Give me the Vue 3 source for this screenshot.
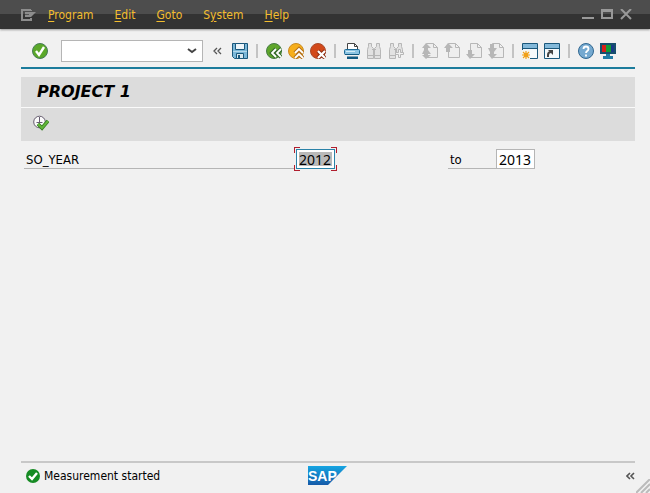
<script setup>
import { ref } from "vue";

const menus = ["Program", "Edit", "Goto", "System", "Help"];
const command = ref("");
const yearFrom = ref("2012");
const yearTo = ref("2013");
const status = ref("Measurement started");
</script>

<template>
  <div class="window">
    <header class="titlebar">
      <button class="plain menu-icon" aria-label="Window menu">
        <svg width="16" height="12" viewBox="0 0 16 12">
          <path d="M10 1H1v10h9V9M10 1v1" fill="none" stroke="#8d8d8d" stroke-width="2" />
          <path d="M4 3h11l-5 5H4z" fill="#8d8d8d" />
          <path d="M4 5h4v1H4z" fill="#555" />
        </svg>
      </button>
      <nav class="menus">
        <button v-for="menu in menus" :key="menu" class="plain menu">
          <u v-if="menu !== 'System'">{{ menu[0] }}</u
          ><template v-if="menu !== 'System'">{{ menu.slice(1) }}</template
          ><template v-else>S<u>y</u>stem</template>
        </button>
      </nav>
      <div class="controls">
        <button class="plain" aria-label="Minimize">
          <svg width="12" height="12"><path d="M0 8h12v2H0z" fill="#999" /></svg>
        </button>
        <button class="plain" aria-label="Maximize">
          <svg width="12" height="12">
            <path d="M0 0h12v10H0zM2 3v5h8V3z" fill="#999" fill-rule="evenodd" />
          </svg>
        </button>
        <button class="plain" aria-label="Close">
          <svg width="12" height="12">
            <path d="M1 0l10 10M11 0L1 10" stroke="#999" stroke-width="2" />
          </svg>
        </button>
      </div>
    </header>

    <main class="content">
      <div class="toolbar">
        <button class="plain enter" aria-label="Enter">
          <svg width="16" height="16">
            <circle cx="8" cy="8" r="7.5" fill="#5ba829" stroke="#477c57" />
            <path d="M4 8l3 4 5-8" fill="none" stroke="#fff" stroke-width="2.4" />
          </svg>
        </button>
        <div class="combo">
          <select v-model="command" aria-label="Command">
            <option value=""></option>
          </select>
          <svg class="arrow" width="10" height="6">
            <path d="M1 1l4 3 4-3" fill="none" stroke="#444" stroke-width="2" />
          </svg>
        </div>
        <button class="plain collapse" aria-label="Hide command field">
          <svg width="9" height="8">
            <path d="M4 1L1 4l3 3M8 1L5 4l3 3" fill="none" stroke="#555" stroke-width="1.3" />
          </svg>
        </button>
        <button class="plain" aria-label="Save">
          <svg width="16" height="16">
            <path d="M.5 .5h15v15h-13l-2-2z" fill="#7bb7d8" stroke="#1b587c" />
            <path d="M3.5 .5h9v6h-9z" fill="#eef6fa" stroke="#1b587c" />
            <path d="M1 8.5h14" stroke="#b5d8ea" />
            <path d="M4.5 10.5h7v5h-7z" fill="#d8e8ef" stroke="#1b587c" />
            <path d="M6 12h2v3H6z" fill="#1b587c" />
          </svg>
        </button>
        <span class="separator"></span>
        <button class="plain" aria-label="Back">
          <svg width="16" height="16">
            <circle cx="8" cy="8" r="7.5" fill="#5fa62b" stroke="#477c45" />
            <path d="M10 6l-4 4 4 4M15 6l-4 4 4 4" fill="none" stroke="#356b2b" stroke-width="4" />
            <path d="M10 6l-4 4 4 4M15 6l-4 4 4 4" fill="none" stroke="#fff" stroke-width="1.8" />
          </svg>
        </button>
        <button class="plain" aria-label="Exit">
          <svg width="16" height="16">
            <circle cx="8" cy="8" r="7.5" fill="#f6ae1b" stroke="#c98a22" />
            <path d="M7 10l4-4 4 4M7 15l4-4 4 4" fill="none" stroke="#b5711b" stroke-width="4" />
            <path d="M7 10l4-4 4 4M7 15l4-4 4 4" fill="none" stroke="#fff" stroke-width="1.8" />
          </svg>
        </button>
        <button class="plain" aria-label="Cancel">
          <svg width="16" height="16">
            <circle cx="8" cy="8" r="7.5" fill="#d2491a" stroke="#a84a2c" />
            <path d="M8 8l7 7M15 8l-7 7" stroke="#8b2d13" stroke-width="4" />
            <path d="M8 8l7 7M15 8l-7 7" stroke="#fff" stroke-width="2.2" />
          </svg>
        </button>
        <span class="separator"></span>
        <button class="plain" aria-label="Print">
          <svg width="16" height="16">
            <path d="M3.5 7V.5h7l3 3V7" fill="#fff" stroke="#444" />
            <path d="M10.5 .5v3h3" fill="none" stroke="#444" />
            <rect x=".5" y="6.5" width="15" height="5" rx="1" fill="#8ac3e2" stroke="#1e6a96" />
            <path d="M2 8.5h9" stroke="#d4ecf7" />
            <path d="M1 11h14v1H1zM3 13.500h11V16H3z" fill="#125a82" />
          </svg>
        </button>
        <button class="plain" aria-label="Find" disabled>
          <svg width="16" height="16" fill="#e2e2e2" stroke="#b7b7b7">
            <path d="M2.500 .5h3v3l2 2v10h-6v-9l1-3zM10.500 .5h3v3l1 3v9h-6v-10l2-2z" />
            <path d="M6 6.500h4M1.500 12.500h6M8.500 12.500h6" />
          </svg>
        </button>
        <button class="plain" aria-label="Find next" disabled>
          <svg width="16" height="16" fill="#e2e2e2" stroke="#b7b7b7">
            <path d="M2.500 .5h3v3l2 2v10h-6v-9l1-3zM10.500 .5h3v3l1 3v4h-6v-5l2-2z" />
            <path d="M6 6.500h2M1.500 12.500h6" />
            <path d="M10.500 6.500h2v3h3v2h-3v3h-2v-3h-3v-2h3z" fill="#f1f1f1" />
          </svg>
        </button>
        <span class="separator"></span>
        <button class="plain" aria-label="First page" disabled>
          <svg width="16" height="16">
            <path d="M4.500 .5h7l4 4v10h-11zM11.500 .5v4h4" fill="#eee" stroke="#b7b7b7" />
            <path d="M4 0l5 5H6v2l3 4H6v1h3l-5 4-4-4h2v-1H0l2-4V5H0z" fill="#b7b7b7" />
          </svg>
        </button>
        <button class="plain" aria-label="Previous page" disabled>
          <svg width="16" height="16">
            <path d="M4.500 .5h7l4 4v10h-11zM11.500 .5v4h4" fill="#eee" stroke="#b7b7b7" />
            <path d="M4 0l5 5H6v4H2V5H0z" fill="#b7b7b7" />
          </svg>
        </button>
        <button class="plain" aria-label="Next page" disabled>
          <svg width="16" height="16">
            <path d="M4.500 .5h7l4 4v10h-11zM11.500 .5v4h4" fill="#eee" stroke="#b7b7b7" />
            <path d="M2 7h4v4h3l-5 5-4-5h2z" fill="#b7b7b7" />
          </svg>
        </button>
        <button class="plain" aria-label="Last page" disabled>
          <svg width="16" height="16">
            <path d="M4.500 .5h7l4 4v10h-11zM11.500 .5v4h4" fill="#eee" stroke="#b7b7b7" />
            <path d="M2 1h4v4h3l-3 4v2h3l-5 5-4-5h2V9L0 5h2z" fill="#b7b7b7" />
          </svg>
        </button>
        <span class="separator"></span>
        <button class="plain" aria-label="New session">
          <svg width="16" height="16">
            <path d="M.5 .5h15v15H.5z" fill="#f5f9fb" stroke="#1b587c" />
            <path d="M1 1h14v4H1z" fill="#83b9da" />
            <path d="M1 5.5h14" stroke="#1b587c" />
            <path d="M0 7h8v9H0z" fill="#f5f5f5" />
            <path d="M4 8v8M0 12h8M1 9l6 6M7 9l-6 6" stroke="#f0a01b" stroke-width="1.200" />
            <circle cx="4" cy="12" r="2.300" fill="#f0a01b" />
          </svg>
        </button>
        <button class="plain" aria-label="Create shortcut">
          <svg width="16" height="16">
            <path d="M.5 .5h15v15H.5z" fill="#f5f9fb" stroke="#1b587c" />
            <path d="M1 1h14v4H1z" fill="#83b9da" />
            <path d="M1 5.5h14" stroke="#1b587c" />
            <path d="M4 14v-2q0-3 3-3" fill="none" stroke="#444" stroke-width="2" />
            <path d="M4 7h5v5z" fill="#444" />
          </svg>
        </button>
        <span class="separator"></span>
        <button class="plain" aria-label="Help">
          <svg width="16" height="16">
            <circle cx="8" cy="8" r="7.5" fill="#75a9d0" stroke="#316891" />
            <path d="M5.500 6q0-2.500 2.500-2.500T10.500 6q0 1-1.300 2T8 10M8 11.500v2" fill="none" stroke="#fff" stroke-width="1.800" />
          </svg>
        </button>
        <button class="plain" aria-label="Customize layout">
          <svg width="16" height="16">
            <path d="M0 0h16v11H0z" fill="#164f6d" />
            <path d="M2 2h4v7H2z" fill="#d71e18" />
            <path d="M6 2h5v7H6z" fill="#149c35" />
            <path d="M11 2h3v7h-3z" fill="#183a86" />
            <path d="M6 11h4v2H6zM3 13h10v3H3z" fill="#217ca5" />
          </svg>
        </button>
      </div>

      <h1 class="title">PROJECT 1</h1>
      <div class="app-toolbar">
        <button class="plain" aria-label="Execute">
          <svg width="16" height="16">
            <circle cx="6.500" cy="7" r="5.800" fill="#fafafa" stroke="#665d70" />
            <path d="M6.500 2v6M3.500 7.500h6" stroke="#665d70" />
            <path d="M5 9l4 4 6-7" fill="none" stroke="#347b20" stroke-width="3.600" />
            <path d="M5 9l4 4 6-7" fill="none" stroke="#62b63a" stroke-width="2" />
          </svg>
        </button>
      </div>

      <form class="selection" @submit.prevent>
        <label class="name" for="year-from">SO_YEAR</label>
        <div class="focused">
          <input id="year-from" v-model="yearFrom" class="year" maxlength="4" />
          <i class="corner top left"></i>
          <i class="corner top right"></i>
          <i class="corner bottom left"></i>
          <i class="corner bottom right"></i>
        </div>
        <label class="to" for="year-to">to</label>
        <input id="year-to" v-model="yearTo" class="year" maxlength="4" />
      </form>
    </main>

    <footer class="statusbar">
      <p class="message">
        <svg width="14" height="14">
          <circle cx="7" cy="7" r="7" fill="#168b24" />
          <path d="M3 7l3 3 5-6" fill="none" stroke="#fff" stroke-width="2.400" />
        </svg>
        {{ status }}
      </p>
      <svg class="logo" width="40" height="20" role="img" aria-label="SAP">
        <defs>
          <linearGradient id="sap-blue" x2="0" y2="1">
            <stop offset="0" stop-color="#16a5e2" />
            <stop offset="1" stop-color="#155aa8" />
          </linearGradient>
        </defs>
        <path d="M0 0h39L20 19H0z" fill="url(#sap-blue)" />
        <text x="0" y="15" class="logo-text">SAP</text>
      </svg>
      <button class="plain expand" aria-label="Show status fields">
        <svg width="9" height="8">
          <path d="M4 1L1 4l3 3M8 1L5 4l3 3" fill="none" stroke="#555" stroke-width="1.600" />
        </svg>
      </button>
      <svg class="grip" width="14" height="14">
        <path d="M0 14L14 0M5 14l9-9M10 14l4-4" stroke="#bbb" stroke-width="2" />
      </svg>
    </footer>
  </div>
</template>

<style>
body {
  margin: 0;
  background: #f1f1f1;
}
</style>

<style scoped>
.window {
  position: relative;
  display: flex;
  flex-direction: column;
  min-height: 100vh;
  font-family: "DejaVu Sans Condensed", "Noto Sans", sans-serif;
  font-size: 12px;
  color: #000;
  background: #f1f1f1;
}

svg {
  display: block;
}

.plain {
  padding: 0;
  border: none;
  background: none;
  color: inherit;
  font: inherit;
}

.titlebar {
  display: flex;
  align-items: center;
  height: 29px;
  padding: 0 18px 0 21px;
  background: linear-gradient(#4d4d4d 0 14px, #333 14px);
  box-shadow: 0 1px 2px #999;
}
.menu-icon {
  margin-right: 11px;
}
.menus {
  display: flex;
  flex: 1;
  gap: 21px;
  color: #f3bd2f;
}
.menu u {
  text-underline-offset: 2px;
}
.controls {
  display: flex;
  gap: 7px;
}

.content {
  flex: 1;
  padding: 6px 15px 0 21px;
}

.toolbar {
  display: flex;
  align-items: center;
  gap: 6px;
  height: 32px;
  padding-left: 11px;
  border-bottom: 2px solid #1c7c9c;
}
.enter {
  margin-right: 7px;
}
.combo {
  position: relative;
  width: 142px;
}
.combo select {
  display: block;
  appearance: none;
  width: 100%;
  height: 22px;
  border: 1px solid #b5b5b5;
  border-radius: 0;
  background: #fff;
}
.arrow {
  position: absolute;
  top: 8px;
  right: 6px;
  pointer-events: none;
}
.collapse {
  margin: 0 4px;
}
.separator {
  width: 2px;
  height: 14px;
  margin: 0 2px;
  background: #c3c3c3;
}

.title {
  margin: 8px 0 1px;
  padding-left: 16px;
  background: #dcdcdc;
  font-family: "DejaVu Sans", sans-serif;
  font-size: 16px;
  font-style: italic;
  line-height: 29px;
  padding-bottom: 1px;
  box-shadow: 0 1px #fafafa;
}
.app-toolbar {
  display: flex;
  align-items: center;
  height: 33px;
  padding-left: 12px;
  background: #dcdcdc;
}
.app-toolbar .plain {
  margin-bottom: 4px;
}

.selection {
  display: flex;
  margin: 8px 0 0 3px;
  font-size: 13px;
}
.name,
.to {
  box-sizing: border-box;
  height: 20px;
  padding-left: 2px;
  border-bottom: 1px solid #b5b5b5;
  line-height: 21px;
}
.name {
  width: 271px;
}
.to {
  width: 48px;
  margin-left: 112px;
}
.year {
  display: block;
  box-sizing: border-box;
  width: 39px;
  height: 20px;
  padding: 2px;
  border: 1px solid #b5b5b5;
  background: #fff;
  font-family: "Noto Sans", sans-serif;
  font-size: 14px;
  line-height: 14px;
  outline: none;
}
.focused {
  position: relative;
  padding: 0 1px;
}
.focused .year {
  border-color: #2a82a8;
  background: #b9b9b9 content-box;
  box-shadow: inset 0 0 0 2px #fff;
}
.corner {
  position: absolute;
  width: 5px;
  height: 5px;
  border: 0 solid #b01e2e;
}
.top {
  top: -2px;
  border-top-width: 1px;
}
.bottom {
  bottom: -2px;
  border-bottom-width: 1px;
}
.left {
  left: -1px;
  border-left-width: 1px;
}
.right {
  right: -1px;
  border-right-width: 1px;
}

.statusbar {
  display: grid;
  grid-template-columns: 1fr auto 1fr;
  align-items: center;
  height: 26px;
  margin: 0 15px 0 21px;
  padding-bottom: 4px;
  border-top: 2px solid #c8c8c8;
}
.message {
  display: flex;
  align-items: center;
  gap: 4px;
  margin: 0;
  padding-left: 5px;
}
.logo-text {
  fill: #fff;
  font: bold 14px "Liberation Sans", sans-serif;
}
.expand {
  justify-self: end;
}
.grip {
  position: absolute;
  right: 0;
  bottom: 0;
}
</style>
